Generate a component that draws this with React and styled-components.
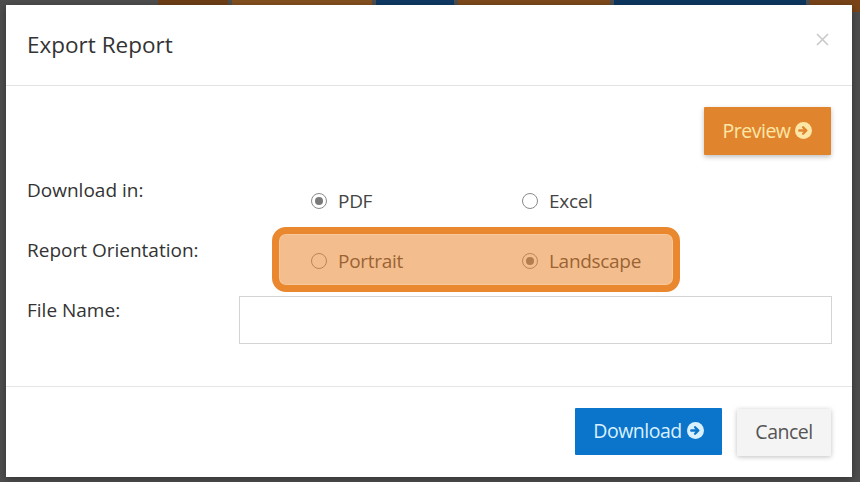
import React from "react";
import styled, { createGlobalStyle } from "styled-components";

const Global = createGlobalStyle`
  html, body { margin: 0; padding: 0; background: #4e4e4e; }
  body { font-family: "Open Sans", "Noto Sans", sans-serif; }
  * { box-sizing: border-box; }
`;

const Screen = styled.div`
  position: relative;
  width: 860px;
  height: 482px;
  overflow: hidden;
  background: #4e4e4e;
  padding: 5px 8px 0 6px;
`;

const TabStrip = styled.div`
  position: absolute;
  top: 0;
  left: 0;
  right: 0;
  height: 12px;
  display: flex;
  gap: 4px;
  padding-left: 158px;
`;

const Tab = styled.div`
  height: 12px;
  width: ${(p) => p.$w}px;
  background: ${(p) => p.$c};
`;

const Modal = styled.div`
  position: relative;
  width: 846px;
  height: 472px;
  background: #fff;
  box-shadow: 0 2px 8px rgba(0, 0, 0, 0.35);
  display: flex;
  flex-direction: column;
`;

const Header = styled.div`
  height: 81px;
  border-bottom: 1px solid #e3e3e3;
  display: flex;
  align-items: center;
  justify-content: space-between;
  padding: 0 22px 2px 21px;
`;

const Title = styled.h4`
  margin: 0;
  font-size: 22.5px;
  font-weight: 400;
  color: #333;
  letter-spacing: 0;
`;

const Close = styled.button`
  border: 0;
  background: none;
  padding: 0;
  width: 14px;
  height: 14px;
  display: flex;
  margin-bottom: 8px;
`;

const Body = styled.div`
  flex: 1;
  padding: 21px 21px 0 21px;
  display: flex;
  flex-direction: column;
`;

const TopBar = styled.div`
  display: flex;
  justify-content: flex-end;
  margin-bottom: 21px;
`;

const Button = styled.button`
  font-family: "Open Sans", "Noto Sans", sans-serif;
  font-size: 19.5px;
  height: ${(p) => p.$h || 47}px;
  width: ${(p) => p.$w}px;
  border: 0;
  border-radius: 1px;
  display: flex;
  align-items: center;
  justify-content: center;
  gap: 5px;
  letter-spacing: -0.5px;
  padding: 0 0 2px 0;
  background: ${(p) => p.$bg};
  color: ${(p) => p.$fg};
  box-shadow: ${(p) => p.$shadow || "none"};
`;

const Row = styled.div`
  display: grid;
  grid-template-columns: 212px 1fr;
  height: ${(p) => p.$h}px;
`;

const Label = styled.div`
  font-size: 19px;
  line-height: 22px;
  color: #333;
  padding-top: 3px;
  letter-spacing: 0;
`;

const Controls = styled.div`
  position: relative;
  display: flex;
  padding-left: 72px;
  padding-top: 14px;
`;

const Option = styled.label`
  width: 211px;
  display: flex;
  align-items: center;
  gap: 11px;
  height: 22px;
  font-size: 19px;
  color: #444;
  letter-spacing: -0.3px;
`;

const RadioDot = styled.span`
  width: 16px;
  height: 16px;
  flex: none;
  border-radius: 50%;
  border: 1px solid #8a8a8a;
  background: #fff;
  display: flex;
  align-items: center;
  justify-content: center;
  &::after {
    content: "";
    width: 8px;
    height: 8px;
    border-radius: 50%;
    background: ${(p) => (p.$on ? "#7a7a7a" : "transparent")};
  }
`;

const Highlight = styled.div`
  position: absolute;
  left: 33px;
  top: -9px;
  width: 408px;
  height: 65px;
  border: 7px solid #e9882f;
  border-radius: 14px;
  background: rgba(232, 128, 38, 0.52);
  box-shadow: inset 0 0 0 1px rgba(255, 220, 180, 0.4);
  pointer-events: none;
`;

const Input = styled.input`
  width: 593px;
  height: 48px;
  border: 1px solid #d4d4d4;
  background: #fff;
  outline: none;
`;

const Footer = styled.div`
  height: 91px;
  border-top: 1px solid #e6e6e6;
  display: flex;
  justify-content: flex-end;
  align-items: flex-start;
  gap: 15px;
  padding: 21px 21px 0 0;
`;

const CircleArrow = ({ bg, fg, size = 17 }) => (
  <svg width={size} height={size} viewBox="0 0 16 16">
    <circle cx="8" cy="8" r="8" fill={bg} />
    <path d="M4 8h6.2M7.6 4.9L10.7 8l-3.1 3.1" stroke={fg} strokeWidth="2.2" fill="none" strokeLinecap="round" strokeLinejoin="round" />
  </svg>
);

export default function App() {
  return (
    <>
      <Global />
      <Screen>
        <TabStrip>
          <Tab $w={70} $c="#6e3f15" />
          <Tab $w={140} $c="#84501f" />
          <Tab $w={78} $c="#0f3a64" />
          <Tab $w={152} $c="#7d4a1a" />
          <Tab $w={192} $c="#0d3760" />
          <Tab $w={50} $c="#7a4418" />
        </TabStrip>
        <Modal>
          <Header>
            <Title>Export Report</Title>
            <Close aria-label="close">
              <svg width="13" height="13" viewBox="0 0 13 13">
                <path d="M1 1l11 11M12 1L1 12" stroke="#c9c9c9" strokeWidth="1.6" />
              </svg>
            </Close>
          </Header>
          <Body>
            <TopBar>
              <Button $w={127} $h={48} $bg="#e0852e" $fg="#fde7a6" $shadow="0 2px 5px rgba(0,0,0,0.25)">
                Preview <CircleArrow bg="#fde7a6" fg="#e0852e" />
              </Button>
            </TopBar>
            <Row $h={60}>
              <Label>Download in:</Label>
              <Controls>
                <Option><RadioDot $on />PDF</Option>
                <Option><RadioDot />Excel</Option>
              </Controls>
            </Row>
            <Row $h={60}>
              <Label>Report Orientation:</Label>
              <Controls>
                <Option><RadioDot />Portrait</Option>
                <Option><RadioDot $on />Landscape</Option>
                <Highlight />
              </Controls>
            </Row>
            <Row $h={47}>
              <Label>File Name:</Label>
              <div><Input type="text" /></div>
            </Row>
          </Body>
          <Footer>
            <Button $w={147} $bg="#0b74cb" $fg="#d9f1ff">
              Download <CircleArrow bg="#d9f1ff" fg="#0b74cb" />
            </Button>
            <Button $w={94} $bg="#f4f4f4" $fg="#555" $shadow="0 1px 5px rgba(0,0,0,0.25)" style={{ marginTop: 1 }}>
              Cancel
            </Button>
          </Footer>
        </Modal>
      </Screen>
    </>
  );
}
